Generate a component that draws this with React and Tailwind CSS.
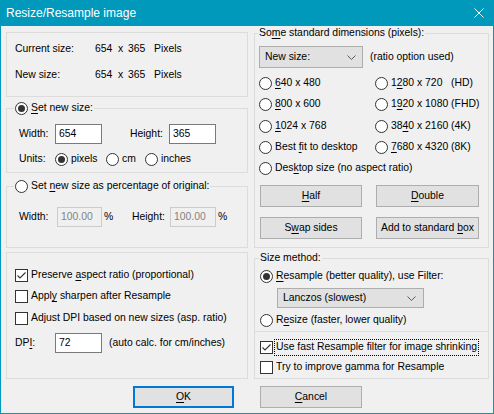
import React from "react";

function Radio({ checked }) {
  return (
    <span className="w-[13px] h-[13px] rounded-full border border-[#333333] bg-white flex items-center justify-center shrink-0">
      {checked && <span className="w-[7px] h-[7px] rounded-full bg-[#333333]" />}
    </span>
  );
}

function Check({ checked }) {
  return (
    <span className="w-[13px] h-[13px] border border-[#333333] bg-white flex items-center justify-center shrink-0">
      {checked && (
        <svg width="11" height="11" viewBox="0 0 11 11">
          <polyline points="1.5,5.5 4,8 9.5,2.5" fill="none" stroke="#333333" strokeWidth="1.1" />
        </svg>
      )}
    </span>
  );
}

function U({ children }) {
  return <span className="underline underline-offset-[1.5px]">{children}</span>;
}

function Chevron() {
  return (
    <svg width="9" height="5" viewBox="0 0 9 5" className="shrink-0">
      <polyline points="0.5,0.5 4.5,4.5 8.5,0.5" fill="none" stroke="#5a5a5a" strokeWidth="1" />
    </svg>
  );
}

function Btn({ className, children }) {
  return (
    <div className={"h-[22px] bg-[#e1e1e1] border border-[#adadad] flex items-center justify-center " + className}>
      <span className="whitespace-pre">{children}</span>
    </div>
  );
}

function Input({ value, className }) {
  return (
    <div className={"h-[20px] bg-white border border-[#7a7a7a] flex items-center pl-[3px] " + className}>
      {value}
    </div>
  );
}

function DisInput({ value, className }) {
  return (
    <div className={"h-[20px] bg-[#f0f0f0] border border-[#cccccc] text-[#838383] flex items-center pl-[3px] " + className}>
      {value}
    </div>
  );
}

function RadioItem({ checked, children, className }) {
  return (
    <div className={"h-[16px] flex items-center " + (className || "")}>
      <Radio checked={checked} />
      <span className="ml-[3px] whitespace-pre">{children}</span>
    </div>
  );
}

export default function App() {
  return (
    <div className="w-[494px] h-[414px] bg-[#0099bc] flex flex-col font-['Liberation_Sans',Arial,sans-serif] text-[10.4px] text-black leading-none">
      <div className="h-[26px] shrink-0 flex items-center pl-[6px] pr-[10px] text-white text-[12px]">
        <span className="flex-1">Resize/Resample image</span>
        <svg width="10" height="10" viewBox="0 0 10 10">
          <line x1="0.5" y1="0.5" x2="9.5" y2="9.5" stroke="white" strokeWidth="1" />
          <line x1="9.5" y1="0.5" x2="0.5" y2="9.5" stroke="white" strokeWidth="1" />
        </svg>
      </div>
      <div className="flex-1 mx-[1px] mb-[1px] bg-[#f0f0f0] flex flex-col">
        <div className="flex pl-[5px] gap-[6px]">
          {/* LEFT COLUMN */}
          <div className="w-[242px] flex flex-col">
            <div className="mt-[6px] h-[65px] border border-[#dcdcdc] pt-[8px] pl-[8px] flex flex-col">
              <div className="h-[16px] flex items-center">
                <span className="w-[80px]">Current size:</span>
                <span className="w-[23px]">654</span>
                <span className="w-[10px]">x</span>
                <span className="w-[26px]">365</span>
                <span>Pixels</span>
              </div>
              <div className="mt-[10px] h-[16px] flex items-center">
                <span className="w-[80px]">New size:</span>
                <span className="w-[23px]">654</span>
                <span className="w-[10px]">x</span>
                <span className="w-[26px]">365</span>
                <span>Pixels</span>
              </div>
            </div>

            <fieldset className="mt-[3px] h-[73px] border border-[#dcdcdc] min-w-0">
              <legend className="ml-[7px] px-[1px] h-[16px]">
                <span className="h-[16px] flex items-center">
                  <Radio checked />
                  <span className="ml-[3px]"><U>S</U>et new size:</span>
                </span>
              </legend>
              <div className="pt-[8px] pl-[12px] flex flex-col">
                <div className="h-[20px] flex items-center">
                  <span className="w-[36px]">Width:</span>
                  <Input value="654" className="w-[47px]" />
                  <span className="ml-[28px] w-[39px]">Height:</span>
                  <Input value="365" className="w-[47px]" />
                </div>
                <div className="mt-[7px] h-[16px] flex items-center">
                  <span className="w-[36px]">Units:</span>
                  <RadioItem checked className="w-[51px]">pixels</RadioItem>
                  <RadioItem className="w-[39px]">cm</RadioItem>
                  <RadioItem>inches</RadioItem>
                </div>
              </div>
            </fieldset>

            <fieldset className="mt-[5px] h-[70px] border border-[#dcdcdc] min-w-0">
              <legend className="ml-[7px] px-[1px] h-[16px]">
                <span className="h-[16px] flex items-center">
                  <Radio />
                  <span className="ml-[3px]">Set <U>n</U>ew size as percentage of original:</span>
                </span>
              </legend>
              <div className="pt-[13px] pl-[12px]">
                <div className="h-[20px] flex items-center">
                  <span className="w-[38px]">Width:</span>
                  <DisInput value="100.00" className="w-[45px]" />
                  <span className="ml-[2px] w-[28px]">%</span>
                  <span className="w-[38px]">Height:</span>
                  <DisInput value="100.00" className="w-[46px]" />
                  <span className="ml-[2px]">%</span>
                </div>
              </div>
            </fieldset>

            <div className="mt-[4px] h-[127px] border border-[#dcdcdc] pt-[14px] pl-[8px] flex flex-col">
              <div className="h-[16px] flex items-center">
                <Check checked />
                <span className="ml-[3px]">Preserve <U>a</U>spect ratio (proportional)</span>
              </div>
              <div className="mt-[5px] h-[16px] flex items-center">
                <Check />
                <span className="ml-[3px]">Appl<U>y</U> sharpen after Resample</span>
              </div>
              <div className="mt-[6px] h-[16px] flex items-center">
                <Check />
                <span className="ml-[3px]">Adjust DPI based on new sizes (asp. ratio)</span>
              </div>
              <div className="mt-[7px] h-[20px] flex items-center">
                <span className="w-[40px]">DP<U>I</U>:</span>
                <Input value="72" className="w-[47px]" />
                <span className="ml-[7px]">(auto calc. for cm/inches)</span>
              </div>
            </div>
          </div>

          {/* RIGHT COLUMN */}
          <div className="w-[235px] flex flex-col">
            <fieldset className="h-[222px] border border-[#dcdcdc] min-w-0">
              <legend className="ml-[3px] px-[1px] h-[14px] leading-[14px]">
                So<U>m</U>e standard dimensions (pixels):
              </legend>
              <div className="pt-[6px] pl-[4px] flex flex-col">
                <div className="h-[22px] flex items-center">
                  <div className="w-[104px] h-[22px] bg-[#e1e1e1] border border-[#adadad] flex items-center pl-[5px] pr-[6px]">
                    <span className="flex-1">New size:</span>
                    <Chevron />
                  </div>
                  <span className="ml-[7px]">(ratio option used)</span>
                </div>
                <div className="mt-[7px] flex">
                  <RadioItem className="w-[116px]"><U>6</U>40 x 480</RadioItem>
                  <RadioItem>1<U>2</U>80 x 720   (HD)</RadioItem>
                </div>
                <div className="mt-[5px] flex">
                  <RadioItem className="w-[116px]"><U>8</U>00 x 600</RadioItem>
                  <RadioItem>1<U>9</U>20 x 1080 (FHD)</RadioItem>
                </div>
                <div className="mt-[6px] flex">
                  <RadioItem className="w-[116px]"><U>1</U>024 x 768</RadioItem>
                  <RadioItem>38<U>4</U>0 x 2160 (4K)</RadioItem>
                </div>
                <div className="mt-[5px] flex">
                  <RadioItem className="w-[116px]">Best <U>f</U>it to desktop</RadioItem>
                  <RadioItem><U>7</U>680 x 4320 (8K)</RadioItem>
                </div>
                <div className="mt-[5px] flex">
                  <RadioItem>Des<U>k</U>top size (no aspect ratio)</RadioItem>
                </div>
                <div className="mt-[9px] flex pl-[1px] gap-[14px]">
                  <Btn className="w-[102px]"><U>H</U>alf</Btn>
                  <Btn className="w-[103px]"><U>D</U>ouble</Btn>
                </div>
                <div className="mt-[10px] flex pl-[1px] gap-[14px]">
                  <Btn className="w-[102px]">S<U>w</U>ap sides</Btn>
                  <Btn className="w-[103px]">Add to standard <U>b</U>ox</Btn>
                </div>
              </div>
            </fieldset>

            <fieldset className="mt-[3px] h-[128px] border border-[#dcdcdc] min-w-0">
              <legend className="ml-[4px] px-[1px] h-[14px] leading-[14px]">Size method:</legend>
              <div className="pt-[3px] flex flex-col">
                <RadioItem checked className="pl-[5px]"><U>R</U>esample (better quality), use Filter:</RadioItem>
                <div className="mt-[4px] ml-[22px] w-[147px] h-[20px] bg-[#e1e1e1] border border-[#adadad] flex items-center pl-[5px] pr-[7px]">
                  <span className="flex-1">Lanczos (slowest)</span>
                  <Chevron />
                </div>
                <RadioItem className="pl-[5px] mt-[4px]">R<U>e</U>size (faster, lower quality)</RadioItem>
                <div className="mt-[3px] h-[1px] bg-[#dcdcdc]" />
                <div className="mt-[7px] h-[17px] pl-[5px] flex items-center">
                  <Check checked />
                  <span className="ml-[1px] w-[205px] h-[17px] border border-dotted border-black pl-[1px] flex items-center whitespace-nowrap">
                    Use fast Resample filter for image shrinking
                  </span>
                </div>
                <div className="mt-[3px] h-[16px] pl-[5px] flex items-center">
                  <Check />
                  <span className="ml-[3px]">Try to improve gamma for Resample</span>
                </div>
              </div>
            </fieldset>
          </div>
        </div>

        <div className="mt-[7px] flex pl-[132px] gap-[26px]">
          <div className="w-[101px] h-[22px] bg-[#e1e1e1] border-2 border-[#0078d7] flex items-center justify-center">
            <span><U>O</U>K</span>
          </div>
          <Btn className="w-[102px]"><U>C</U>ancel</Btn>
        </div>
      </div>
    </div>
  );
}
